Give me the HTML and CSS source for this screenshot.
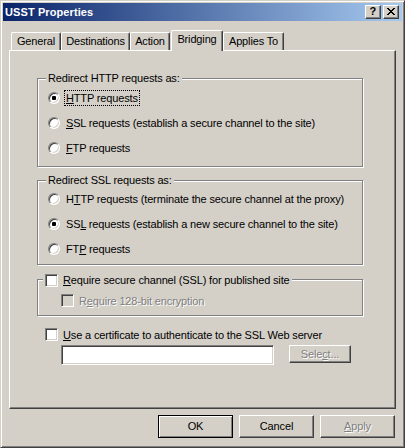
FILE: index.html
```html
<!DOCTYPE html>
<html>
<head>
<meta charset="utf-8">
<title>USST Properties</title>
<link rel="stylesheet" href="styles.css">
</head>
<body>
<div class="window">
  <div class="titlebar">
    <span class="title">USST Properties</span>
    <div class="capbtns">
      <div class="cap help">?</div>
      <div class="cap close">
        <svg width="8" height="7" viewBox="0 0 8 7" shape-rendering="crispEdges"><path fill="#000" d="M0 0h2v1H0zM6 0h2v1H6zM1 1h2v1H1zM5 1h2v1H5zM2 2h4v1H2zM3 3h2v1H3zM2 4h4v1H2zM1 5h2v1H1zM5 5h2v1H5zM0 6h2v1H0zM6 6h2v1H6z"/></svg>
      </div>
    </div>
  </div>

  <div class="tabs">
    <div class="tab t-general">General</div>
    <div class="tab t-dest">Destinations</div>
    <div class="tab t-action">Action</div>
    <div class="tab sel t-bridge">Bridging</div>
    <div class="tab t-applies">Applies To</div>
  </div>

  <div class="panel">
    <div class="group g-http">
      <div class="legend">Redirect HTTP requests as:</div>
      <div class="row"><span class="rb on"></span><span class="lbl focus"><u>H</u>TTP requests</span></div>
      <div class="row"><span class="rb"></span><span class="lbl"><u>S</u>SL requests (establish a secure channel to the site)</span></div>
      <div class="row"><span class="rb"></span><span class="lbl"><u>F</u>TP requests</span></div>
    </div>

    <div class="group g-ssl">
      <div class="legend">Redirect SSL requests as:</div>
      <div class="row"><span class="rb"></span><span class="lbl">H<u>T</u>TP requests (terminate the secure channel at the proxy)</span></div>
      <div class="row"><span class="rb on"></span><span class="lbl">SS<u>L</u> requests (establish a new secure channel to the site)</span></div>
      <div class="row"><span class="rb"></span><span class="lbl">FT<u>P</u> requests</span></div>
    </div>

    <div class="group g-secure">
      <div class="legend chk-legend"><span class="cb"></span><span class="cblbl"><u>R</u>equire secure channel (SSL) for published site</span></div>
      <div class="crow"><span class="cb dis"></span><span class="cblbl disabled">R<u>e</u>quire 128-bit encryption</span></div>
    </div>

    <div class="crow cert"><span class="cb"></span><span class="cblbl"><u>U</u>se a certificate to authenticate to the SSL Web server</span></div>
    <div class="fieldrow">
      <div class="field"></div>
      <div class="btn small"><span class="disabled">Sele<u>c</u>t...</span></div>
    </div>
  </div>

  <div class="buttons">
    <div class="btn default">OK</div>
    <div class="btn">Cancel</div>
    <div class="btn"><span class="disabled"><u>A</u>pply</span></div>
  </div>
</div>
</body>
</html>
```

FILE: styles.css
```css
* { box-sizing: border-box; }
html, body { margin: 0; padding: 0; }
body {
  background: #d4d0c8;
  font-family: "Liberation Sans", Arial, sans-serif;
  font-size: 11px;
  letter-spacing: -0.15px;
  color: #000;
}
u { text-decoration: underline; text-underline-offset: 1px; }

.window {
  width: 405px;
  height: 448px;
  background: #d4d0c8;
  border: 1px solid;
  border-color: #d4d0c8 #404040 #404040 #d4d0c8;
  box-shadow: inset 1px 1px #fff, inset -1px -1px #808080;
  padding: 2px;
  display: flex;
  flex-direction: column;
}

/* title bar */
.titlebar {
  height: 18px;
  flex: none;
  display: flex;
  align-items: center;
  padding-left: 2px;
  background: linear-gradient(to right, #0a246a, #a6caf0);
  color: #fff;
  font-weight: bold;
  letter-spacing: 0.1px;
}
.title { line-height: 14px; }
.capbtns {
  margin-left: auto;
  margin-right: 3px;
  display: flex;
  gap: 2px;
}
.cap {
  width: 16px;
  height: 14px;
  background: #d4d0c8;
  border: 1px solid;
  border-color: #fff #404040 #404040 #fff;
  box-shadow: inset -1px -1px #808080;
  display: flex;
  align-items: center;
  justify-content: center;
  color: #000;
  font-weight: bold;
  font-size: 11px;
  line-height: 11px;
  padding-bottom: 1px;
}
.cap svg { display: block; }

/* tabs */
.tabs {
  margin-top: 9px;
  height: 20px;
  flex: none;
  display: flex;
  align-items: flex-end;
  padding-left: 8px;
  position: relative;
  z-index: 1;
}
.tab {
  height: 18px;
  border-left: 1px solid #fff;
  border-top: 1px solid #fff;
  border-right: 1px solid #404040;
  box-shadow: inset -1px 0 #808080;
  border-radius: 2px 2px 0 0;
  text-align: center;
  line-height: 17px;
  background: #d4d0c8;
  white-space: nowrap;
}
.tab.sel {
  height: 21px;
  margin-bottom: -1px;
  padding-bottom: 3px;
  margin-left: 1px;
}
.t-general { width: 50px; }
.t-dest { width: 69px; }
.t-action { width: 40px; }
.t-bridge { width: 52px; }
.t-applies { width: 61px; }

/* panel */
.panel {
  height: 359px;
  flex: none;
  margin: 0 6px;
  border: 1px solid;
  border-color: #fff #404040 #404040 #fff;
  box-shadow: inset -1px -1px #808080;
  padding: 27px 32px 0 27px;
  display: flex;
  flex-direction: column;
}

.group {
  position: relative;
  border: 1px solid #808080;
  box-shadow: inset 1px 1px #fff, 1px 1px #fff;
  flex: none;
}
.legend {
  position: absolute;
  top: -7px;
  left: 8px;
  padding: 0 2px;
  line-height: 13px;
  background: #d4d0c8;
  white-space: nowrap;
}
.g-http { padding: 6px 0 6px 10px; }
.g-ssl { margin-top: 13px; padding: 5px 0 3px 10px; }
.g-secure { margin-top: 14px; padding: 12px 0 6px 23px; }

.row {
  height: 25px;
  display: flex;
  align-items: center;
}
.rb {
  width: 12px;
  height: 12px;
  border-radius: 50%;
  background: #fff;
  border: 1px solid;
  border-color: #808080 #fff #fff #808080;
  box-shadow: inset 1px 1px #404040, inset -1px -1px #d4d0c8;
  position: relative;
  flex: none;
}
.rb.on::after {
  content: "";
  position: absolute;
  left: 3px;
  top: 3px;
  width: 4px;
  height: 4px;
  border-radius: 1px;
  background: #000;
}
.lbl {
  margin-left: 4px;
  padding: 0 1px;
  border: 1px dotted transparent;
  line-height: 14px;
  white-space: nowrap;
}
.lbl.focus { border-color: #000; }

.cb {
  width: 13px;
  height: 13px;
  background: #fff;
  border: 1px solid;
  border-color: #808080 #fff #fff #808080;
  box-shadow: inset 1px 1px #404040, inset -1px -1px #d4d0c8;
  flex: none;
}
.cb.dis { background: #d4d0c8; }
.cblbl {
  margin-left: 5px;
  white-space: nowrap;
  line-height: 14px;
}
.chk-legend {
  left: 5px;
  padding: 0 2px 0 2px;
  display: flex;
  align-items: center;
}
.crow {
  height: 17px;
  display: flex;
  align-items: center;
}
.crow.cert {
  margin-top: 10px;
  padding-left: 8px;
}
.disabled {
  color: #808080;
  text-shadow: 1px 1px 0 #fff;
}

.fieldrow {
  margin-top: 2px;
  padding-left: 24px;
  display: flex;
  align-items: flex-start;
  gap: 15px;
}
.field {
  width: 213px;
  height: 20px;
  background: #fff;
  border: 1px solid;
  border-color: #808080 #fff #fff #808080;
  box-shadow: inset 1px 1px #404040, inset -1px -1px #d4d0c8;
}

/* buttons */
.btn {
  width: 75px;
  height: 23px;
  flex: none;
  background: #d4d0c8;
  border: 1px solid;
  border-color: #fff #404040 #404040 #fff;
  box-shadow: inset -1px -1px #808080;
  display: flex;
  align-items: center;
  justify-content: center;
  line-height: 13px;
}
.btn.small {
  width: 62px;
  height: 18px;
}
.btn.default {
  border-color: #000;
  box-shadow: inset 1px 1px #fff, inset -1px -1px #808080;
}
.buttons {
  margin-top: 6px;
  flex: none;
  display: flex;
  justify-content: flex-end;
  gap: 6px;
  padding-right: 7px;
}
```
